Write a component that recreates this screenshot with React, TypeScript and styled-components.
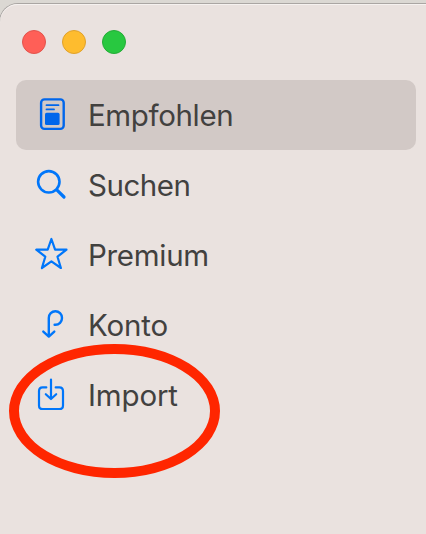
import React from "react";
import styled, { createGlobalStyle } from "styled-components";

const GlobalStyle = createGlobalStyle`
  * { box-sizing: border-box; }
  body { margin: 0; background: #dbd8d3; overflow: hidden; }
`;

const Desktop = styled.div`
  position: relative;
  width: 426px;
  height: 534px;
  padding-top: 4px;
  overflow: hidden;
  background: #dbd8d3;
`;

const Window = styled.aside`
  width: 460px;
  height: 560px;
  padding: 26px 0 0 16px;
  border-radius: 18px 0 0 0;
  background: #eae2df;
  box-shadow: 0 0 0 1px #aaa6a3, inset 0 1px 0 #f6f2f0;
`;

const TrafficLights = styled.div`
  display: flex;
  gap: 16px;
  padding-left: 6px;
  margin-bottom: 26px;
`;

const Light = styled.span<{ $fill: string; $edge: string }>`
  width: 24px;
  height: 24px;
  border-radius: 50%;
  border: 1px solid ${(p) => p.$edge};
  background: ${(p) => p.$fill};
`;

const Menu = styled.nav`
  display: flex;
  flex-direction: column;
  width: 400px;
`;

const MenuItem = styled.a<{ $active?: boolean }>`
  display: flex;
  align-items: center;
  gap: 18px;
  height: 70px;
  padding-left: 18px;
  border-radius: 10px;
  color: ${(p) => (p.$active ? "#0066eb" : "#0076fa")};
  background: ${(p) => (p.$active ? "#d2c9c6" : "transparent")};
`;

const Icon = styled.svg`
  width: 36px;
  height: 36px;
  flex: none;
  fill: none;
  stroke: currentColor;
  stroke-width: 2.4;
  stroke-linecap: round;
  stroke-linejoin: round;
`;

const Label = styled.span<{ $tracking: number }>`
  font: 400 29.5px/36px Inter, sans-serif;
  letter-spacing: ${(p) => p.$tracking}px;
  color: #42413f;
  white-space: nowrap;
`;

const Highlight = styled.div`
  position: absolute;
  left: 9px;
  top: 344px;
  width: 211px;
  height: 134px;
  border: 10px solid #ff2600;
  border-radius: 50%;
`;

const items = [
  {
    label: "Empfohlen",
    tracking: -0.37,
    icon: (
      <>
        <rect x="7.1" y="2.4" width="22.6" height="29.5" rx="3.4" />
        <path d="M12.5 8.2H24.5M12.5 12.4H20" strokeWidth="1.8" />
        <rect x="11" y="15.8" width="14.6" height="12.2" rx="1.6" fill="currentColor" stroke="none" />
      </>
    ),
  },
  {
    label: "Suchen",
    tracking: -0.45,
    icon: (
      <>
        <circle cx="14.8" cy="14.8" r="10.7" strokeWidth="2.6" />
        <path d="M22.8 22.8L30 30" strokeWidth="3.2" />
      </>
    ),
  },
  {
    label: "Premium",
    tracking: -0.3,
    icon: (
      <path
        d="M17.4 2L21.1 12.6L32.5 12.7L23.5 19.7L26.9 31L17.4 24.3L7.9 31L11.3 19.7L2.3 12.7L13.7 12.6Z"
        strokeWidth="2.2"
      />
    ),
  },
  {
    label: "Konto",
    tracking: -0.15,
    icon: (
      <path d="M14.8 29.4V11A6.6 6.8 0 1 1 21.4 17.8H20.6M9.3 24.6L14.8 29.6L20.3 24.6" />
    ),
  },
  {
    label: "Import",
    tracking: -0.15,
    icon: (
      <>
        <path d="M12.3 10.4H8.6Q5 10.4 5 14V28.4Q5 32 8.6 32H25.4Q29 32 29 28.4V14Q29 10.4 25.4 10.4H21.7" strokeWidth="2.2" />
        <path d="M17 2.6V21.6M11.8 17.2L17 22L22.2 17.2" strokeWidth="2.2" />
      </>
    ),
  },
];

export default function App() {
  return (
    <>
      <GlobalStyle />
      <Desktop>
        <Window>
          <TrafficLights>
            <Light $fill="#ff5f57" $edge="#e2534c" />
            <Light $fill="#febc2e" $edge="#e0a12b" />
            <Light $fill="#28c840" $edge="#24ac37" />
          </TrafficLights>
          <Menu>
            {items.map((item, i) => (
              <MenuItem key={item.label} $active={i === 0}>
                <Icon viewBox="0 0 36 36">{item.icon}</Icon>
                <Label $tracking={item.tracking}>{item.label}</Label>
              </MenuItem>
            ))}
          </Menu>
        </Window>
        <Highlight />
      </Desktop>
    </>
  );
}
